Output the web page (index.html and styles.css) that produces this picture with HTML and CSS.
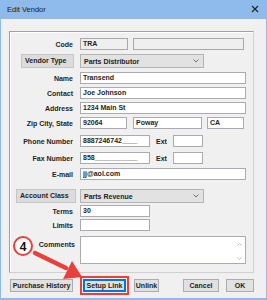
FILE: index.html
```html
<!DOCTYPE html>
<html lang="en">
<head>
    <meta charset="UTF-8">
    <title>Edit Vendor</title>
    <link rel="stylesheet" href="styles.css">
</head>
<body>

    <div class="window">
        <!-- Title bar -->
        <div class="titlebar">
            <span class="title">Edit Vendor</span>
            <svg class="close" width="8" height="8" viewBox="0 0 8 8">
                <path d="M1 1 L7 7 M7 1 L1 7" stroke="#222" stroke-width="1.1" fill="none"/>
            </svg>
        </div>

        <div class="body">
            <div class="group">
                <div class="row">
                    <span class="lbl">Code</span>
                    <div class="field ro w-code">TRA</div>
                    <div class="field ro w-desc ml5"></div>
                </div>

                <div class="row tall gap4">
                    <div class="lbl"><span class="lbl-btn vt">Vendor Type</span></div>
                    <div class="combo">Parts Distributor
                        <svg class="chev" width="6" height="4" viewBox="0 0 6 4"><path d="M0.5 0.5 L3 3 L5.5 0.5" stroke="#777" fill="none"/></svg>
                    </div>
                </div>

                <div class="row gap4">
                    <span class="lbl">Name</span>
                    <div class="field w-full">Transend</div>
                </div>
                <div class="row">
                    <span class="lbl">Contact</span>
                    <div class="field w-full">Joe Johnson</div>
                </div>
                <div class="row">
                    <span class="lbl">Address</span>
                    <div class="field w-full">1234 Main St</div>
                </div>
                <div class="row">
                    <span class="lbl">Zip City, State</span>
                    <div class="field w-zip">92064</div>
                    <div class="field w-city ml6">Poway</div>
                    <div class="field w-state ml5">CA</div>
                </div>

                <div class="row gap6">
                    <span class="lbl">Phone Number</span>
                    <div class="field w-phone">8887246742____</div>
                    <span class="ext">Ext</span>
                    <div class="field w-ext"></div>
                </div>
                <div class="row gap5">
                    <span class="lbl">Fax Number</span>
                    <div class="field w-phone">858___________</div>
                    <span class="ext">Ext</span>
                    <div class="field w-ext"></div>
                </div>
                <div class="row gap4">
                    <span class="lbl">E-mail</span>
                    <div class="field w-full">jj@aol.com</div>
                </div>

                <div class="row tall gap9">
                    <div class="lbl"><span class="lbl-btn ac">Account Class</span></div>
                    <div class="combo">Parts Revenue
                        <svg class="chev" width="6" height="4" viewBox="0 0 6 4"><path d="M0.5 0.5 L3 3 L5.5 0.5" stroke="#777" fill="none"/></svg>
                    </div>
                </div>
                <div class="row gap2">
                    <span class="lbl">Terms</span>
                    <div class="field w-phone">30</div>
                </div>
                <div class="row gap2">
                    <span class="lbl">Limits</span>
                    <div class="field w-phone"></div>
                </div>

                <div class="row memo gap5">
                    <span class="lbl lbl-top">Comments</span>
                    <div class="field w-full textarea">
                        <div class="scroll">
                            <svg width="5" height="3" viewBox="0 0 5 3"><path d="M0.5 2.5 L2.5 0.5 L4.5 2.5" stroke="#bbb" fill="none"/></svg>
                            <svg width="5" height="3" viewBox="0 0 5 3"><path d="M0.5 0.5 L2.5 2.5 L4.5 0.5" stroke="#bbb" fill="none"/></svg>
                        </div>
                    </div>
                </div>
            </div>

            <!-- Buttons -->
            <div class="buttons">
                <button class="btn w-ph">Purchase History</button>
                <button class="btn w-sl default">Setup Link</button>
                <button class="btn w-ul">Unlink</button>
                <button class="btn w-cancel">Cancel</button>
                <button class="btn w-ok">OK</button>
            </div>
        </div>

        <!-- Annotation: step 4 callout -->
        <svg class="annot" width="267" height="300" viewBox="0 0 267 300">
            <path d="M35 253 L66 268" stroke="#e8403c" stroke-width="4.5" stroke-linecap="round"/>
            <polygon points="82,277 63,279 72,261" fill="#e8403c"/>
            <circle cx="23" cy="246" r="9" fill="#fff" stroke="#e8403c" stroke-width="2"/>
            <text x="23" y="250.5" text-anchor="middle" class="step">4</text>
        </svg>
    </div>

</body>
</html>
```

FILE: styles.css
```css
* {
    box-sizing: border-box;
}

body {
    margin: 0;
    font-family: "Liberation Sans", Arial, sans-serif;
    font-size: 7px;
    font-weight: bold;
    color: #1e1e1e;
    background: #fff;
}

/* Window frame */
.window {
    position: relative;
    width: 267px;
    height: 300px;
    background: #f0f0f0;
    border: 1px solid #8ebbec;
    border-top: none;
    border-bottom-width: 2px;
    display: flex;
    flex-direction: column;
}

.titlebar {
    height: 19px;
    margin: 0 -1px;
    background: #8ebbec;
    display: flex;
    align-items: center;
    justify-content: space-between;
    padding: 0 8px 1px 7px;
}

.title {
    font-weight: normal;
    font-size: 7.5px;
    color: #1a1a1a;
}

.close {
    display: block;
}

.body {
    flex: 1;
    padding: 12px 0 0 8px;
}

/* Group box */
.group {
    width: 245px;
    border: 1px solid #a0a0a0;
    border-right-color: #d0d0d0;
    border-bottom-color: #d0d0d0;
    box-shadow: inset 1px 1px 0 #fff;
    padding: 6px 0 8px 0;
}

.row {
    display: flex;
    align-items: center;
    height: 12px;
    margin-top: 3px;
}

.row:first-child {
    margin-top: 0;
}

.row.tall {
    height: 14px;
}

.row.memo {
    height: 28px;
    align-items: flex-start;
}

.gap2 { margin-top: 2px; }
.gap4 { margin-top: 4px; }
.gap5 { margin-top: 5px; }
.gap6 { margin-top: 6px; }
.gap9 { margin-top: 9px; }

.ml5 { margin-left: 5px; }
.ml6 { margin-left: 6px; }

.lbl {
    width: 70px;
    flex: none;
    text-align: right;
    padding-right: 7px;
    white-space: nowrap;
    display: flex;
    justify-content: flex-end;
    align-items: center;
    height: 100%;
}

.lbl-top {
    height: auto;
    padding-top: 5px;
    padding-right: 5px;
}

.lbl-btn {
    display: block;
    height: 14px;
    line-height: 12px;
    background: #dcdcdc;
    border: 1px solid #c6c6c6;
    text-align: left;
    padding-left: 3px;
}

.lbl-btn.vt {
    width: 53px;
    margin-right: -1px;
}

.lbl-btn.ac {
    width: 60px;
    margin-right: -3px;
}

/* Inputs */
.field {
    height: 12px;
    line-height: 10px;
    background: #fff;
    border: 1px solid #a9abb0;
    padding-left: 2px;
    white-space: nowrap;
    overflow: hidden;
    flex: none;
}

.field.ro {
    background: #efefef;
    border-color: #a8a8a8;
}

.w-code { width: 48px; }
.w-desc { width: 111px; }
.w-full { width: 166px; }
.w-zip { width: 47px; }
.w-city { width: 69px; }
.w-state { width: 37px; }
.w-phone { width: 70px; }
.w-ext { width: 30px; }

.ext {
    width: 23px;
    padding-left: 6px;
    flex: none;
}

.textarea {
    height: 28px;
    position: relative;
}

.scroll {
    position: absolute;
    right: 3px;
    top: 6px;
    bottom: 3px;
    display: flex;
    flex-direction: column;
    justify-content: space-between;
}

.scroll svg {
    display: block;
}

.combo {
    width: 124px;
    height: 14px;
    background: #e2e2e2;
    border: 1px solid #b4b4b4;
    padding: 0 4px 0 3px;
    display: flex;
    align-items: center;
    justify-content: space-between;
}

/* Bottom buttons */
.buttons {
    display: flex;
    margin-top: 6px;
    padding-left: 1px;
}

.btn {
    font: inherit;
    color: #1e1e1e;
    height: 13px;
    padding: 0;
    background: #e1e1e1;
    border: 1px solid #adadad;
    line-height: 11px;
    text-align: center;
}

.btn.default {
    border-color: #0078d7;
    box-shadow: inset 0 0 0 1px #0078d7;
    outline: 2px solid #e8403c;
    outline-offset: 1px;
}

.w-ph { width: 63px; }
.w-sl { width: 43px; margin-left: 10px; }
.w-ul { width: 25px; margin-left: 8px; }
.w-cancel { width: 36px; margin-left: 24px; }
.w-ok { width: 28px; margin-left: 7px; }

/* Annotation overlay */
.annot {
    position: absolute;
    left: -1px;
    top: 0;
    pointer-events: none;
}

.step {
    font-family: "Liberation Sans", Arial, sans-serif;
    font-size: 12px;
    font-weight: bold;
    fill: #111;
}
```
